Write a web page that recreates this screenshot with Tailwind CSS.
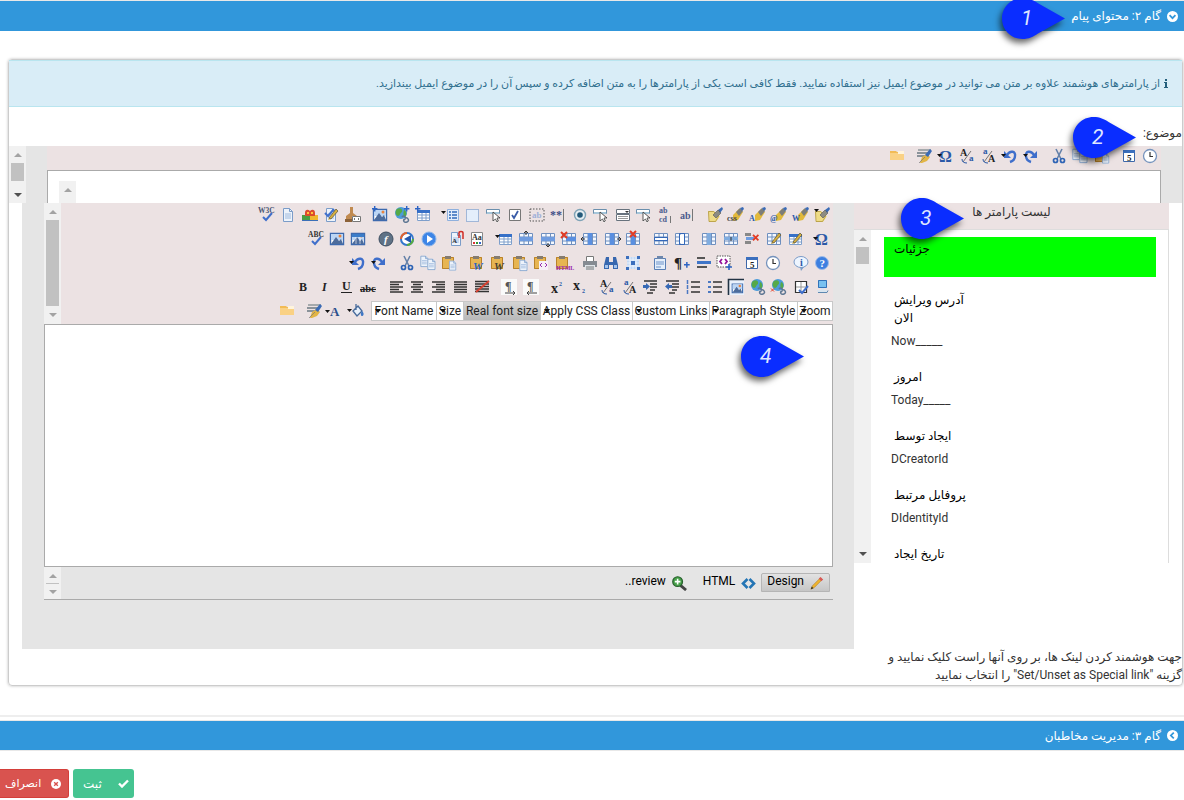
<!DOCTYPE html>
<html lang="fa" dir="rtl">
<head>
<meta charset="utf-8">
<meta name="viewport" content="width=device-width, initial-scale=1">
<title>محتوای پیام</title>
<script src="https://cdn.jsdelivr.net/npm/@tailwindcss/browser@4"></script>
</head>
<body class="relative min-h-screen overflow-hidden bg-white font-[Roboto,'DejaVu_Sans',sans-serif] text-[12px] leading-[18px] text-[#333]">

<svg class="hidden" aria-hidden="true">
  <symbol id="pin" viewBox="0 0 63 42"><path d="M20.500 0C9 0 0 9.200 0 20.500S9 41 20.500 41C27 41 31 38.800 36 35.500L63 20.500 36 5.200C31 2 27 0 20.500 0z" fill="#0a2dff"/></symbol>
  <symbol id="up" viewBox="0 0 8 4"><path d="M0 4h8L4 0z" fill="#a3a3a3"/></symbol>
  <symbol id="down" viewBox="0 0 8 4"><path d="M0 0h8L4 4z" fill="#a3a3a3"/></symbol>
  <symbol id="downdark" viewBox="0 0 8 4"><path d="M0 0h8L4 4z" fill="#505050"/></symbol>
</svg>

<header class="flex h-[31px] items-center border-t border-[#e8e8e8] bg-[#3197db] px-[6px] text-[12px] text-white text-shadow-[0_0_1px_#fff]">
  <button class="flex items-center gap-[6px]">
    <svg class="size-[11px]" viewBox="0 0 12 12"><circle cx="6" cy="6" r="6" fill="#fff"/><path d="M2.800 4.600 6 7.800l3.200-3.200" fill="none" stroke="#3197db" stroke-width="1.900"/></svg>
    <span>گام ۲: محتوای پیام</span>
  </button>
</header>

<main class="mt-[28px] ml-[8px] mr-px rounded-sm border border-[#ccc] shadow-[0_0_3px_#bbb]">
  <p class="flex h-[47px] items-center gap-[4px] border-b border-t border-[#b9e5ef] bg-[#d9edf7] px-[14px] text-[11px] text-[#31708f]">
    <svg class="h-[9px] w-[4px]" viewBox="0 0 4 9"><path d="M1 0h2v2H1zM0 3h3v5h1v1H0V8h1V4H0z" fill="#245f7c"/></svg>
    <span>از پارامترهای هوشمند علاوه بر متن می توانید در موضوع ایمیل نیز استفاده نمایید. فقط کافی است یکی از پارامترها را به متن اضافه کرده و سپس آن را در موضوع ایمیل بیندازید.</span>
  </p>
  <label for="subject" class="mt-[17px] block h-[22px]">موضوع:</label>

  <section dir="ltr" class="flex h-[57px] bg-[#e5e5e5]">
    <div class="flex w-[17px] flex-col items-center bg-[#f1f1f1] pt-[7px]">
      <svg class="h-1 w-2"><use href="#up"/></svg>
      <div class="mt-[6px] h-[18px] w-[13px] bg-[#c1c1c1]"></div>
      <svg class="mt-3 h-1 w-2"><use href="#downdark"/></svg>
    </div>
    <div class="ml-[21px] mr-[21px] flex min-w-0 flex-1 flex-col bg-[#ece2e3]">
      <div class="flex h-6 shrink-0 items-center justify-end pb-1"><div id="bar0" class="flex w-[275px] items-center"></div></div>
      <div class="relative min-h-0 flex-1 border border-b-0 border-[#aaa] bg-white">
        <textarea id="subject" class="block h-full w-full resize-none overflow-hidden bg-white pl-8 outline-none"></textarea>
        <div class="absolute bottom-0 left-[11px] flex h-[22px] w-[17px] justify-center bg-[#f1f1f1] pt-[7px]"><svg class="h-1 w-2"><use href="#up"/></svg></div>
      </div>
    </div>
  </section>

  <section dir="ltr" class="flex h-[482px]">
    <div class="ml-[13px] h-[446px] min-w-0 flex-1 bg-[#e5e5e5] pl-[22px] pr-[21px]">
      <div class="flex h-[121px]">
        <div class="flex w-[17px] flex-col items-center bg-[#f1f1f1] pt-[7px]">
          <svg class="h-1 w-2"><use href="#up"/></svg>
          <div class="mt-[6px] h-[86px] w-[13px] bg-[#c1c1c1]"></div>
          <svg class="mt-[7px] h-1 w-2"><use href="#down"/></svg>
        </div>
        <div class="flex min-w-0 flex-1 flex-col items-end bg-[#ece2e3]">
          <div id="bar1" class="flex h-6 w-[577px] items-center"></div>
          <div id="bar2" class="flex h-6 w-[528px] items-center"></div>
          <div id="bar3" class="flex h-6 w-[486px] items-center"></div>
          <div id="bar4" class="flex h-6 w-[540px] items-center"></div>
          <div class="flex h-6 items-center">
            <div id="bar5" class="mr-[5px] flex w-[90px] items-center"></div>
            <div id="lists" class="flex h-[20px] border border-[#c8c8c8] bg-[#c8c8c8]"></div>
          </div>
        </div>
      </div>
      <textarea aria-label="متن پیام" class="block h-[243px] w-full resize-none border border-[#aaa] bg-white outline-none"></textarea>
      <div class="flex h-[33px] border-b border-[#aaa]">
        <div class="flex w-[17px] flex-col items-center bg-[#f1f1f1] pt-[7px]">
          <svg class="h-1 w-2"><use href="#up"/></svg>
          <div class="mt-[5px] h-px w-[13px] bg-[#c1c1c1]"></div>
          <svg class="mt-[6px] h-1 w-2"><use href="#down"/></svg>
        </div>
        <div class="flex flex-1 items-start justify-end pr-[3px] pt-[5px] text-[12px] text-black">
          <button class="mr-[16px] flex h-5 items-center gap-[6px] pb-[2px]">..review
            <svg class="mt-1 size-[15px]" viewBox="0 0 16 16"><path d="m9 10 6 5" stroke="#444" stroke-width="3"/><circle cx="6" cy="6" r="5.200" fill="#46a048" stroke="#27602d" stroke-width="1.300"/><path d="M6 3v6M3 6h6" stroke="#fff" stroke-width="1.700"/></svg></button>
          <button class="mr-[5px] flex h-5 items-center gap-[6px] pb-[2px]">HTML
            <svg class="mt-1 h-[11px] w-[15px]" viewBox="0 0 15 11"><path d="M6.500 1 2 5.500 6.500 10M8.500 1 13 5.500 8.500 10" fill="none" stroke="#2475b5" stroke-width="2.600"/></svg></button>
          <button class="mt-px flex h-[19px] items-center gap-[6px] rounded-t-[2px] border border-[#b5b5b5] bg-linear-to-b from-[#e2e2e2] to-[#c6c6c6] px-[5px] pb-[3px]">Design
            <svg class="mt-1 size-[14px]" viewBox="0 0 16 16"><path d="m1 15 2-4L12 2l2 2-9 9z" fill="#f0b52d" stroke="#b07b1b" stroke-width=".7"/><path d="m12 1 3 3-2 2-3-3z" fill="#d95858"/><path d="m1 15 1-3 2 2z" fill="#332"/></svg></button>
        </div>
      </div>
    </div>

    <aside class="w-[328px]">
      <h2 dir="rtl" class="mr-[13px] h-[27px] border-b border-[#ddd] bg-[#ece2e3] text-center text-[12px] leading-[18px]">لیست پارامتر ها</h2>
      <div class="mr-[13px] flex h-[333px] border-r border-[#ddd]">
        <div class="flex w-[17px] flex-col items-center bg-[#f1f1f1] pt-[7px] pb-[7px]">
          <svg class="h-1 w-2"><use href="#up"/></svg>
          <div class="mt-[6px] h-[17px] w-[13px] bg-[#c1c1c1]"></div>
          <svg class="mt-auto h-1 w-2"><use href="#downdark"/></svg>
        </div>
        <div class="min-w-0 flex-1 overflow-hidden pl-[13px] pr-3 pt-[7px] text-black">
          <div class="h-[40px] bg-[#0f0] pl-[10px] pt-[3px]">جزئیات</div>
          <ul class="pt-[14px]">
            <li class="pl-[10px]">آدرس ویرایش</li>
            <li class="mb-[18px]"><div class="pl-[10px]">الان</div><div class="h-[23px] pl-[7px] pt-[5px] text-[#333]">Now_____</div></li>
            <li class="mb-[18px]"><div class="pl-[10px]">امروز</div><div class="h-[23px] pl-[7px] pt-[5px] text-[#333]">Today_____</div></li>
            <li class="mb-[18px]"><div class="pl-[10px]">ایجاد توسط</div><div class="h-[23px] pl-[7px] pt-[5px] text-[#333]">DCreatorId</div></li>
            <li class="mb-[18px]"><div class="pl-[10px]">پروفایل مرتبط</div><div class="h-[23px] pl-[7px] pt-[5px] text-[#333]">DIdentityId</div></li>
            <li class="pl-[10px]">تاریخ ایجاد</li>
          </ul>
        </div>
      </div>
      <p dir="rtl" class="mt-[85px]">جهت هوشمند کردن لینک ها، بر روی آنها راست کلیک نمایید و<br>گزینه "Set/Unset as Special link" را انتخاب نمایید</p>
    </aside>
  </section>
</main>

<div class="mt-[29px] h-[2px] bg-[#eee]"></div>
<div class="mt-[3px] flex h-[31px] items-center border-y border-[#e8e8e8] bg-[#3197db] px-[6px] text-[12px] text-white text-shadow-[0_0_1px_#fff]">
  <button class="flex items-center gap-[6px]">
    <svg class="size-[11px]" viewBox="0 0 12 12"><circle cx="6" cy="6" r="6" fill="#fff"/><path d="M7.400 2.800 4.200 6l3.200 3.200" fill="none" stroke="#3197db" stroke-width="1.900"/></svg>
    <span>گام ۳: مدیریت مخاطبان</span>
  </button>
</div>
<footer dir="ltr" class="mt-[18px] flex gap-1 text-[11px] text-white text-shadow-[0_0_1px_#fff]">
  <button class="flex h-[29px] w-[69px] items-center justify-between rounded-r-[3px] border border-l-0 border-[#d43f3a] bg-[#d9534f] pl-[5px] pr-[7px]"><span>انصراف</span>
    <svg class="size-[10px]" viewBox="0 0 12 12"><circle cx="6" cy="6" r="6" fill="#fff"/><path d="m3.800 3.800 4.400 4.400m0-4.400L3.800 8.200" stroke="#d9534f" stroke-width="1.700"/></svg></button>
  <button class="flex h-[29px] w-[61px] items-center justify-between rounded-[3px] bg-[#45c491] pl-[10px] pr-[5px] text-[12px]"><span>ثبت</span>
    <svg class="h-[9px] w-[11px]" viewBox="0 0 11 9"><path d="m1 4.500 3 3L10 1.500" fill="none" stroke="#fff" stroke-width="2.400"/></svg></button>
</footer>

<div dir="ltr" class="font-[Roboto,sans-serif] text-[21px] leading-[41px] text-[#dfe6ff] italic">
  <div class="absolute -top-[2px] right-[119px] w-[63px]"><svg class="absolute h-[42px] w-[63px] drop-shadow-[-2px_4px_3px_rgba(0,0,0,0.6)]"><use href="#pin"/></svg><span class="relative pl-[19px]">1</span></div>
  <div class="absolute top-[117px] right-[48px] w-[63px]"><svg class="absolute h-[42px] w-[63px] drop-shadow-[-2px_4px_3px_rgba(0,0,0,0.6)]"><use href="#pin"/></svg><span class="relative pl-[19px]">2</span></div>
  <div class="absolute top-[198px] right-[220px] w-[63px]"><svg class="absolute h-[42px] w-[63px] drop-shadow-[-2px_4px_3px_rgba(0,0,0,0.6)]"><use href="#pin"/></svg><span class="relative pl-[19px]">3</span></div>
  <div class="absolute top-[336px] right-[380px] w-[63px]"><svg class="absolute h-[42px] w-[63px] drop-shadow-[-2px_4px_3px_rgba(0,0,0,0.6)]"><use href="#pin"/></svg><span class="relative pl-[19px]">4</span></div>
</div>

<script>
// Small drawing vocabulary shared by the toolbar icons (16x16 grid)
const P = (d, fill) => `<path d="${d}" fill="${fill}"/>`;
const L = (d, stroke, w = 1) => `<path d="${d}" fill="none" stroke="${stroke}" stroke-width="${w}"/>`;
const T = (x, y, s, t, fill, extra = '') => `<text x="${x}" y="${y}" font-size="${s}" font-family="Liberation Serif" font-weight="bold" fill="${fill}" ${extra}>${t}</text>`;
const at = (x, y, k, g) => `<g transform="translate(${x} ${y}) scale(${k})">${g}</g>`;
const caret = P('M-1 5h5L1.500 8z', '#111');
const page = P('M3 1h7l3 3v11H3z', '#edf3fb') + L('M3.500 1.500h6l3 3v10h-9zM9.500 1.500v3h3', '#7b9cc8') + L('M5 7h6M5 9h6M5 11h6', '#9eb9dd');
const clip = P('M1 2h12v12H1z', '#e7b552') + L('M1.500 2.500h11v11h-11z', '#b9822b') + P('M4 1h6v3H4z', '#857c70');
const image = P('M1 2h14v12H1z', '#fff') + L('M1.500 2.500h13v11h-13z', '#3d6aae', 1.400) + P('M2 3h12v6H2z', '#bcd6f5') + P('M2 13l5-7 3 4 2-2 2 5z', '#4d6c9c') + '<circle cx="11" cy="5" r="1.500" fill="#e9843d"/>';
const grid = P('M1 2h14v12H1z', '#f4f8ff') + L('M1.500 2.500h13v11h-13zM1 6h14M1 10h14M6 2v12M10.500 2v12', '#6f8fbe');
const table = P('M2 3h13v11H2z', '#fff') + L('M2.500 3.500h12v10h-12zM2 8h13M2 11h13M7 5v9M11 5v9', '#7f9fcb') + P('M2 3h13v3H2z', '#3771c8');
const plus = L('M3 0v6M0 3h6', '#2d64c4', 1.600);
const pencil = P('M6 11 13 2l2 2-7 8-3 1z', '#d8b13f') + L('M6 11 13 2l2 2-7 8z', '#5a5138', .700);
const redx = L('m0 1 6 6M6 1 0 7', '#e23b24', 2);
const arrow = P('M7 5v10l2.500-2 1.500 3 1.500-1-1.500-3h3z', '#fff') + L('M7 5v9l2.500-2 1.500 3 1.300-1-1.300-3h3z', '#333', .800);
const field = P('M0 2h14v5H0z', '#fff') + L('M.500 2.500h13v4H.500z', '#6b8fad') + P('M1 5h12v2H1z', '#a6c6da');
const brush = P('M1 4h6l6 5-4 6H2z', '#efdc86') + L('M1.500 4.500h5l5 5-3 5H2z', '#a88d33', .700) + P('M6 8 11 3l3 3-5 5z', '#8d8c82') + P('m11 3 4-3 1 2-3 4z', '#3a6bb6') + L('m6 8 5-5 3 3-5 5z', '#555', .600);
const brushT = (t, c) => P('M5 8l6-6 4 3-5 8-5 1z', '#e2b93c') + P('M8 5 12 1l3 3-4 5z', '#7c7d79') + P('m12 1 3-1 1 2-2 2z', '#3a6bb6') + T(-1, 14, 8, t, c);
const globe = '<circle cx="7" cy="6" r="6" fill="#4a9bdb"/>' + P('M3 2c3-2 6 0 5 3-2 1-2 4-4 4C1 8 1 4 3 2zM10 3c3 1 3 5 1 7-2-1-2-4-1-7z', '#55a948') + L('M8 10c2-3 5 1 2 3M11 11c3-1 5 3 2 4s-4-1-3-3', '#5d7692', 1.500);
const text = (a, b) => L(a, '#333', 1.300) + (b || '');
const full = 'M1 2.500h14M1 5h14M1 7.500h14M1 10h14M1 12.500h14';
const undo = L('M5 7C8 2 14 3 13 8c0 3-2 5-5 6', '#3f6fcb', 2.400) + P('M2 3v7h7z', '#3f6fcb');
const clock = '<circle cx="8" cy="8" r="6.500" fill="#fff" stroke="#7593bd" stroke-width="1.300"/>' + L('M8 4v4.500h3', '#333', 1.200);
const omega = T(1, 14, 16, 'Ω', '#2b59a7');
const swapA = (big, small, x1, y1, x2, y2) => T(x1, y1, 10, big, '#222') + T(x2, y2, 9, small, '#2b59a7') + L('M4 14 12 3', '#666', .900) + L('M3 11c0 3 2 4 5 4', '#2b59a7', 1);
const oneA = P('M2 1h13v2H2z', '#a5a9ac') + P('M1 4h11v2H1zM1 7h8v2H1z', '#8a9299') + P('M4 15 6 9l5-3 3 3-3 4-5 2z', '#e2b545') + P('m9 7 5-6 2 2-4 6z', '#3a6bb6') + L('M3 15 9 9', '#777', .700);
const check = (x, y) => L(`M${x} ${y}l3 3 6-7`, '#3f6fcb', 2);

const I = {
  w3c: T(-1, 6, 7.500, 'W3C', '#4a5573') + check(4, 10), page,
  blocks: P('M0 8h8v6H0z', '#4b9e43') + P('M8 8h8v6H8z', '#f0b72f') + P('M3 6c0-4 3-4 5-2 2-2 5-2 5 2v3H3z', '#dc4b2d') + P('M5 5h2v2H5zM9 5h2v2H9z', '#ffc33b') + P('M0 13h16v1H0z', '#3b70b8'),
  pagecheck: page + check(2, 6) + pencil,
  stamp: P('M5 0h3v6l4 3v3H1V9l4-3z', '#c08a50') + P('M0 12h8v3H0z', '#8c6239') + P('M7 9h9v6H7z', '#fff') + L('M7.500 9.500h8v5h-8zM10 11l-1 1 1 1M13 11l1 1-1 1', '#666', .900),
  imgadd: image + at(0, -1, .9, plus), globeadd: globe + at(10, -1, .9, plus), tableadd: table + at(0, -1, .9, plus),
  form: L('M4.500 2.500h11v11h-11z', '#8fb0dd') + P('M5 3h10v10H5z', '#e2edfb') + L('M6 5h2M9 5h5M6 8h2M9 8h5M6 11h2M9 11h5', '#3169bb', 1.400) + at(-1, -1, 1, caret),
  panel: `<rect x="2.500" y="2.500" width="12" height="12" fill="#e4eefb" stroke="#5b86c0" stroke-dasharray="1 1"/>`,
  btn: field + arrow,
  box: P('M2 2h12v12H2z', '#fff') + L('M2.500 2.500h11v11h-11z', '#777') + L('m5 8 2 3 4-7', '#3a5ca8', 1.800),
  hidden: `<rect x="1" y="2" width="14" height="12" fill="none" stroke="#555" stroke-dasharray="1.500 1.500"/>` + T(3, 11, 9, 'ab', '#9fb0d8'),
  pass: T(0, 12, 12, '**', '#3d4d86') + L('M13.500 2v12', '#777'),
  radio: '<circle cx="8" cy="8" r="5.500" fill="#e6eef2" stroke="#7fa3b6" stroke-width="1.400"/><circle cx="8" cy="8" r="2.800" fill="#235a7a"/>',
  listbox: P('M1 2h14v12H1z', '#fff') + L('M1.500 2.500h13v4h-13zM1.500 7.500h13v6h-13z', '#67727d') + L('M3 9.500h10M3 11.500h10', '#999') + P('M10 4h4l-2 2z', '#333'),
  area: T(1, 6, 8, 'ab', '#4a5b8d') + T(1, 15, 8, 'cd', '#4a5b8d') + L('M12.500 9v7', '#777'),
  input: T(1, 12, 10, 'ab', '#4a5b8d') + L('M13.500 2v12', '#777'),
  brush, bcss: brushT('css', '#444'), bfont: brushT('A', '#2b59a7'), btag: brushT('@', '#2b59a7'), bword: brushT('W', '#2b59a7'), bmenu: brush + at(1, -3, 1, caret),
  spell: T(0, 6, 7.500, 'ABC', '#333') + check(4, 10), img: image, map: image + P('M2 3h12v3H2z', '#3a7cc9') + L('M6 6v7M10 6v7', '#fff', .600),
  flash: '<circle cx="8" cy="8" r="7" fill="#5f7286" stroke="#3e4e61"/>' + T(6, 12, 11, 'f', '#fff', 'font-style="italic"'),
  media: '<circle cx="8" cy="8" r="6" fill="#fff" stroke="#3377cc" stroke-width="2"/>' + L('M2 8a6 6 0 0 1 6-6', '#e4622c', 2) + L('M14 8a6 6 0 0 1-6 6', '#58ac3e', 2) + P('M12 4v8L5 8z', '#2358ae'),
  play: '<circle cx="8" cy="8" r="7" fill="#3d85e6" stroke="#8eb6ea"/>' + P('M6 4l6 4-6 4z', '#fff'),
  doc: page + T(4, 12, 7, 'A', '#333') + L('M11 7V2c0-2 4-2 4 0v6', '#cf2c26', 1.500),
  tpl: P('M2 1h12v14H2z', '#fff') + L('M2.500 1.500h11v13h-11z', '#888') + T(3, 9, 8, 'Aa', '#333') + P('M4 11h2v2H4z', '#d33') + P('M7 11h2v2H7z', '#393') + P('M10 11h2v2h-2z', '#36c'),
  tmenu: table + at(-1, -1, 1, caret),
  rowup: grid + P('M1 6h14v4H1z', '#6f9ce0') + L('M8 0v4M6 2l2-2 2 2', '#333'), rowdn: grid + P('M1 6h14v4H1z', '#6f9ce0') + L('M8 12v4M6 14l2 2 2-2', '#333'),
  rowdel: grid + P('M5 6h10v4H5z', '#5a8fe0') + redx, colL: grid + P('M6 2h4v12H6z', '#5a8fe0') + L('M-1 8h4M1 6l-2 2 2 2', '#333'), colR: grid + P('M6 2h4v12H6z', '#5a8fe0') + L('M13 8h4M15 6l2 2-2 2', '#333'),
  coldel: grid + P('M6 4h4v10H6z', '#5a8fe0') + at(5, -1, 1, redx),
  mrow: grid + P('M4 6h8v4H4z', '#fff') + L('M1.500 6.500h13v3h-13z', '#3367b8'), mcol: grid + P('M5 4h5v8H5z', '#fff') + L('M5.500 2.500h5v11h-5z', '#3367b8'),
  scol: grid + P('M6 2h4v12H6z', '#7facdf'), srow: grid + P('M1 6h14v3H1z', '#7facdf') + L('M8 6v4', '#333'),
  cdel: P('M1 2h6v3H1zM1 10h6v3H1z', '#888') + P('M2 6h8v3H2z', '#6f9ce0') + at(9, 3, .9, redx), cprop: grid + pencil, tprop: table + pencil,
  omega: omega + at(0, 1, 1, caret), undo: undo + at(0, 1, 1, caret), redo: `<g transform="translate(16 0) scale(-1 1)">${undo}</g>` + at(1, 1, 1, caret),
  cut: L('M5 1l5 10M11 1 6 11', '#6581a8', 1.600) + '<circle cx="4.500" cy="12.500" r="2" fill="none" stroke="#2f64b5" stroke-width="1.700"/><circle cx="11.500" cy="12.500" r="2" fill="none" stroke="#2f64b5" stroke-width="1.700"/>',
  copy: at(-2, 0, .8, page) + at(5, 3, .8, page), paste: clip + at(6, 5, .7, page),
  pw: clip + T(4, 15, 11, 'W', '#2b64c0', 'font-style="italic"'), pww: clip + T(4, 15, 11, 'W', '#4a4234', 'font-style="italic"'), pt: clip + at(5, 4, .8, page),
  pc: clip + P('M6 6h9v9H6z', '#f7f0f7') + L('M9 8l-2 2 2 2M12 8l2 2-2 2', '#9b2fae'), ph: clip + T(1, 15, 6, 'HTML', '#9b1fae'),
  print: P('M4 1h8v5H4z', '#fff') + L('M4.500 1.500h7v5h-7z', '#777') + P('M1 6h14v6H1z', '#858b92') + P('M3 10h10v5H3z', '#dfe5ea') + L('M4 12h8M4 14h8', '#777'),
  find: P('M3 2h3v5h4V2h3l2 8v4h-5v-4H6v4H1v-4z', '#3767af') + P('M2 10h3v3H2zM11 10h3v3h-3z', '#a4c4ee'),
  all: P('M2 2h12v12H2z', '#c3d9f5') + L('M2 5h12M2 8h12M2 11h12M5 2v12M8 2v12M11 2v12', '#fff', .600) + P('M1 1h3v3H1zM12 1h3v3h-3zM1 12h3v3H1zM12 12h3v3h-3zM6 6h4v4H6z', '#3c6fbd'),
  note: P('M2 3h12v12H2z', '#e5effb') + L('M2.500 3.500h11v11h-11z', '#5a7fb5') + P('M5 1h6v3H5z', '#6d87ad') + L('M4 7h8M4 9h8M4 12h5', '#6f93c9'),
  para: T(0, 13, 15, '¶', '#222') + at(10, 7, .95, plus), hr: P('M2 2h8v2H2zM2 11h10v2H2z', '#555') + P('M2 6h14v3H2z', '#3f75c8'),
  code: `<rect x="1" y="1" width="13" height="11" fill="#fff" stroke="#555" stroke-dasharray="1.500 1"/>` + L('M6 4 4 6.500 6 9M9 4l2 2.500L9 9', '#951299', 1.800) + at(10, 9, 1, plus),
  date: P('M2 2h12v12H2z', '#fff') + L('M2.500 2.500h11v11h-11z', '#3e67a8') + P('M2 2h12v3H2z', '#3b6fbe') + T(6, 13, 9, '5', '#222'), clock,
  info: '<ellipse cx="8" cy="7" rx="7" ry="5.500" fill="#eef5ff" stroke="#7c9cc8"/>' + P('M7 12l1 4 3-4z', '#7c9cc8') + T(7, 11, 10, 'i', '#2b59a7'),
  help: '<circle cx="8" cy="8" r="6.500" fill="#3d7fe0" stroke="#9dbbe8"/>' + T(5.5, 12, 11, '?', '#fff'),
  b: T(3, 12, 12, 'B', '#222'), i: T(5, 12, 12, 'I', '#222', 'font-style="italic"'), u: T(3, 11, 12, 'U', '#222') + L('M2 13.500h11', '#222'), s: T(0, 13, 10.5, 'abc', '#222') + L('M0 10.500h16', '#222'),
  al: text('M2 3h13M2 5.500h9M2 8h13M2 10.500h9M2 13h13'), ac: text('M2 3h12M4 5.500h8M2 8h12M4 10.500h8M2 13h12'), ar: text('M1 3h13M5 5.500h9M1 8h13M5 10.500h9M1 13h13'), aj: text('M2 3h13M2 5.500h13M2 8h13M2 10.500h13M2 13h13'), an: text(full, L('M2 13 15 2', '#d8402f', 1.800)),
  ltr: P('M0 0h16v16H0z', '#fafafa') + T(4, 11, 12, '¶', '#555') + L('M4 14h10m-2-2 2 2-2 2', '#444'), rtl: P('M0 0h16v16H0z', '#fafafa') + T(4, 11, 12, '¶', '#555') + L('M14 14H4m2-2-2 2 2 2', '#444'),
  sup: T(1, 14, 14, 'x', '#222') + T(9, 7, 6, '2', '#2b59a7'), sub: T(1, 11, 14, 'x', '#222') + T(10, 14, 6, '2', '#2b59a7'),
  low: swapA('A', 'a', 1, 8, 10, 13), up: swapA('A', 'a', 8, 14, 3, 6),
  ind: text('M2 2h13M8 5h7M8 8h7M8 11h5M5 14h6', P('M1 6h3V4l4 3.500L4 11V9H1z', '#3769b5')), out: text('M2 2h13M8 5h7M8 8h7M8 11h5M5 14h6', P('M8 6H5V4L1 7.500 5 11V9h3z', '#3769b5')),
  ol: text('M6 3h9M6 8h9M6 13h9', L('M2.500 1v4M2.500 6v4M2.500 11v4', '#4b78c2', 1.500)), ul: text('M6 3h9M6 8h9M6 13h9', P('M1 2h3v2H1zM1 7h3v2H1zM1 12h3v2H1z', '#4b78c2')),
  bg: P('M1 1h15v15H1z', '#eaf1fb') + L('M.500 16V.500H16', '#234', 1.600) + at(3, 3, .8, image), link: globe, unlink: globe + at(0, 9, .5, redx),
  border: P('M2 2h12v12H2z', '#fff') + L('M2.500 2.500h11v11h-11z', '#333', 1.200) + L('M8 3v10M3 8h10', '#999') + check(6, 11),
  pc2: P('M4 1h9v8H4z', '#79c1f0') + L('M4.500 1.500h8v7h-8z', '#3472b8') + P('M7 9h3v2h3v3H4l-1-3h4z', '#d9e4ee') + L('M4 13.500h9l1-2', '#5f88b0'),
  folder: P('M1 3h6l1 1h7v8H1z', '#f2bb55') + P('M1 5h14v7H1z', '#fad184') + P('M9 3h6v3H9z', '#fff4dc'),
  fmt: oneA, fcolor: T(3, 13, 13, 'A', '#2b4f8c') + at(-1, 2, 1, caret), bcolor: P('M5 8l5-5 4 5-5 5z', '#e8f0fa') + L('m5 8 5-5 4 5-5 5zM8 1v6', '#476a9b', 1.300) + P('M14 8c3 3 1 5 0 5s-2-2 0-5z', '#3f77c5') + at(0, 1, 1, caret),
};
const bars = {
  bar0: 'folder | fmt omega low up undo redo | cut copy paste | date clock',
  bar1: 'w3c page blocks pagecheck stamp | imgadd globeadd tableadd | form panel btn box hidden pass radio btn listbox btn area input | brush bcss bfont btag bword bmenu',
  bar2: 'spell img map | flash media play | doc tpl | tmenu rowup rowdn rowdel colL colR coldel | mrow mcol | scol srow cdel cprop tprop | omega',
  bar3: 'undo redo | cut copy paste | pw pww pt pc ph | print find all | note para hr code | date clock | info help',
  bar4: 'b i u s | al ac ar aj an | ltr rtl | sup sub | low up ind out ol ul bg link unlink border pc2',
  bar5: 'folder | fmt fcolor bcolor',
};
for (const [id, spec] of Object.entries(bars)) {
  document.getElementById(id).innerHTML = spec.split(' ').map(n => n === '|'
    ? '<span class="w-[6px] shrink-0"></span>'
    : `<button aria-label="${n}" class="flex min-w-0 flex-1 justify-center"><svg class="size-4 shrink-0 overflow-visible" viewBox="0 0 16 16">${I[n]}</svg></button>`).join('');
}
document.getElementById('lists').innerHTML = [['Font Name', 64], ['Size', 27], ['Real font size', 77], ['Apply CSS Class', 92], ['Custom Links', 77], ['Paragraph Style', 88], ['Zoom', 35]].map(([t, w], i) =>
  `<button class="relative flex items-center justify-center whitespace-nowrap text-[12px] text-[#222] ${i ? 'border-l border-[#c8c8c8]' : ''} ${i === 2 ? 'bg-linear-to-b from-[#d4d4d4] to-[#b8b8b8]' : 'bg-white'}" style="width:${w}px">${t}${i === 2 ? '' : '<svg class="absolute left-[3px] top-[7px] h-[4px] w-[6px]" viewBox="0 0 6 4"><path d="M0 0h6L3 4z" fill="#111"/></svg>'}</button>`).join('');
</script>
</body>
</html>
